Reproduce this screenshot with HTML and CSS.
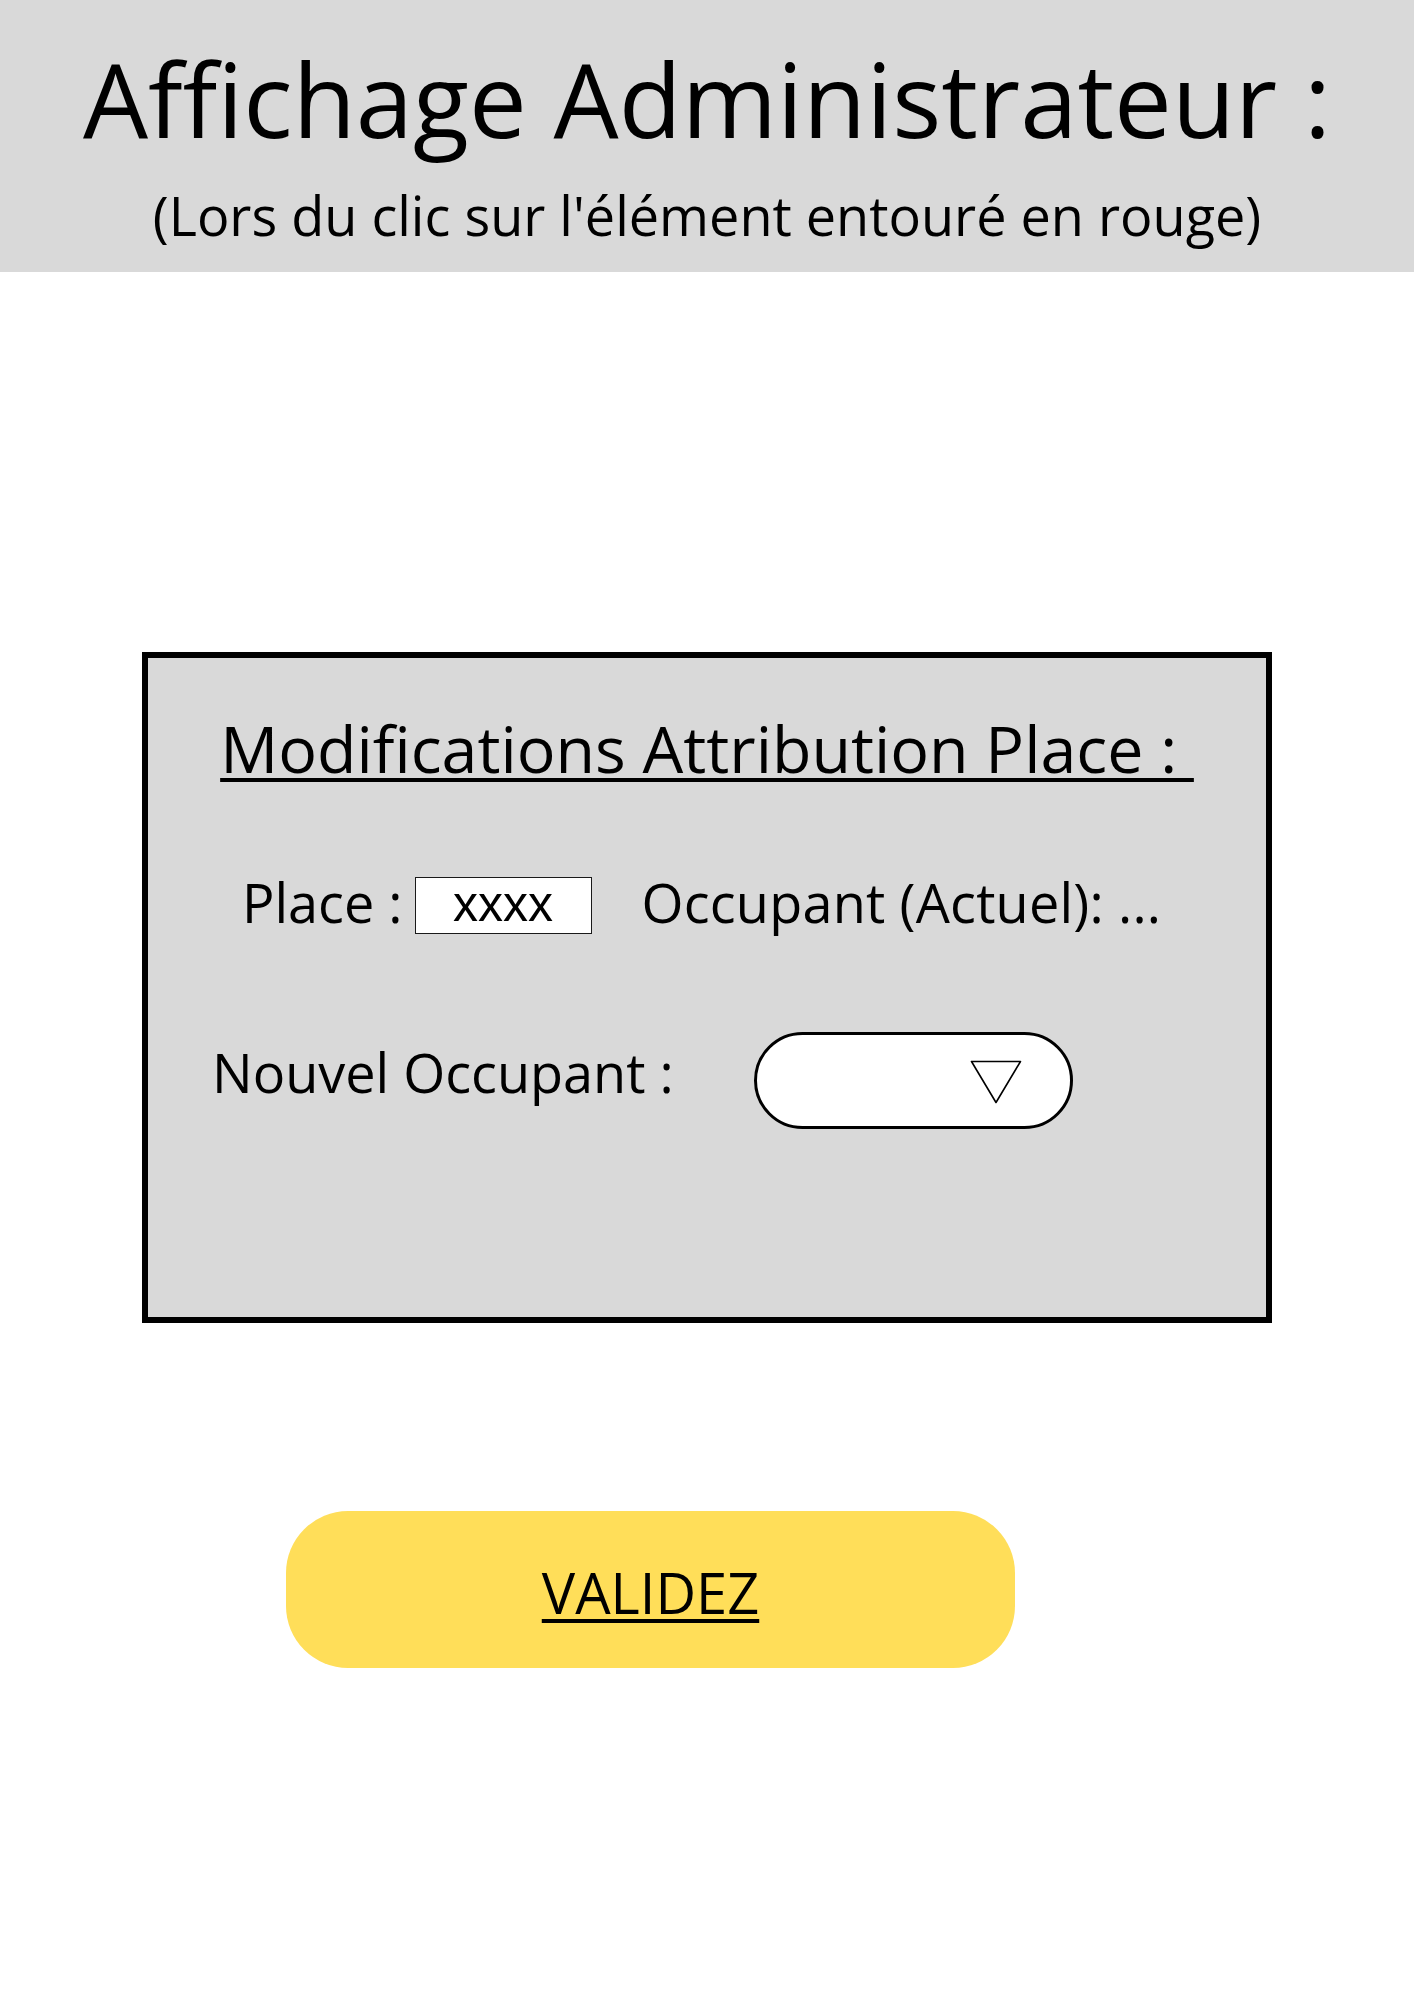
FILE: index.html
```html
<!DOCTYPE html>
<html lang="fr">
<head>
<meta charset="utf-8">
<title>Affichage Administrateur</title>
<link rel="stylesheet" href="styles.css">
</head>
<body>
<header class="header">
  <h1 class="title">Affichage Administrateur :</h1>
  <p class="subtitle">(Lors du clic sur l'élément entouré en rouge)</p>
</header>
<main class="main">
  <section class="panel">
    <h2 class="panel-title">Modifications Attribution Place :&nbsp;</h2>
    <div class="row row-place">
      <span class="label">Place :</span>
      <span class="place-box">xxxx</span>
      <span class="label occupant">Occupant (Actuel): ...</span>
    </div>
    <div class="row row-new">
      <span class="label label-new">Nouvel Occupant :</span>
      <div class="dropdown">
        <svg class="caret" width="52" height="44" viewBox="0 0 52 44">
          <polygon points="1.5,1.5 50.5,1.5 26,42.5" fill="#fff" stroke="#000" stroke-width="1.6" stroke-linejoin="round"/>
        </svg>
      </div>
    </div>
  </section>
  <div class="validate">
    <span class="validate-text">VALIDEZ</span>
  </div>
</main>
</body>
</html>
```

FILE: styles.css
```css
* {
  box-sizing: border-box;
}

html, body {
  margin: 0;
  padding: 0;
  background: #ffffff;
}

body {
  font-family: "Open Sans", "Noto Sans", sans-serif;
  color: #000;
  width: 1414px;
  min-height: 2000px;
}

.header {
  background: #d9d9d9;
  height: 272px;
  padding: 36px 0 22px;
  text-align: center;
}

.title {
  margin: 0;
  font-size: 103px;
  line-height: 124px;
  font-weight: 400;
}

.subtitle {
  margin: 20px 0 0;
  font-size: 54px;
  line-height: 70px;
  font-weight: 400;
}

.main {
  padding-top: 380px;
}

.panel {
  width: 1130px;
  height: 671px;
  margin: 0 auto;
  background: #d9d9d9;
  border: 6px solid #000;
  padding-top: 50px;
}

.panel-title {
  margin: 0;
  text-align: center;
  font-size: 64.5px;
  line-height: 80px;
  font-weight: 400;
  text-decoration: underline;
  text-decoration-thickness: 4px;
  text-underline-offset: 5px;
}

.row {
  display: flex;
  align-items: flex-start;
}

.label {
  font-size: 54px;
  line-height: 70px;
  white-space: nowrap;
}

.row-place {
  margin-top: 79px;
  padding-left: 94px;
}

.place-box {
  margin-top: 10px;
  margin-left: 12px;
  width: 177px;
  height: 57px;
  background: #fff;
  border: 1.5px solid #1a1a1a;
  display: flex;
  align-items: center;
  justify-content: center;
  font-family: "Liberation Sans", Arial, sans-serif;
  font-size: 50px;
  line-height: 1;
  padding-bottom: 4px;
}

.occupant {
  margin-left: 50px;
  letter-spacing: 0.2px;
}

.row-new {
  margin-top: 95px;
  padding-left: 64px;
}

.label-new {
  margin-top: 5px;
}

.dropdown {
  margin-left: 80px;
  width: 319px;
  height: 97px;
  background: #fff;
  border: 3px solid #000;
  border-radius: 49px;
  display: flex;
  justify-content: flex-end;
  align-items: flex-start;
  padding: 25px 48px 0 0;
}

.caret {
  display: block;
}

.validate {
  margin: 188px 0 0 286px;
  width: 729px;
  height: 157px;
  background: #ffde59;
  border-radius: 62px;
  display: flex;
  align-items: center;
  justify-content: center;
}

.validate-text {
  font-size: 56px;
  line-height: 70px;
  text-decoration: underline;
  text-decoration-thickness: 3.5px;
  text-underline-offset: 5px;
  padding-top: 4px;
}
```
